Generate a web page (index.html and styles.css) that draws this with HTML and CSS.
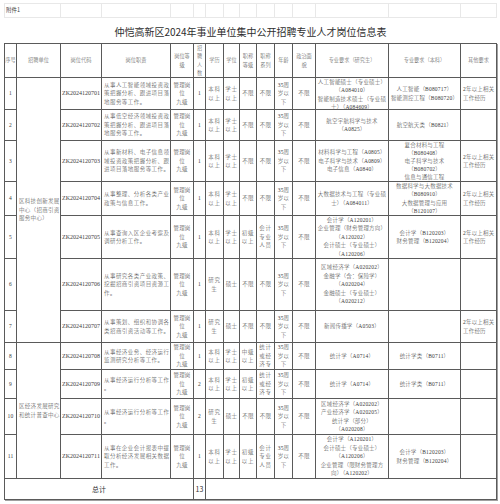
FILE: index.html
```html
<!DOCTYPE html>
<html lang="zh-CN">
<head>
<meta charset="utf-8">
<title>岗位信息表</title>
<link rel="stylesheet" href="styles.css">
</head>
<body>
<div class="page">
  <div class="sheet">
    <div class="sc cs2 note">附件1</div>
    <div class="sc"></div><div class="sc"></div><div class="sc"></div><div class="sc"></div>
    <div class="sc"></div><div class="sc"></div><div class="sc"></div><div class="sc"></div>
    <div class="sc"></div><div class="sc"></div><div class="sc"></div><div class="sc"></div>
    <div class="sc"></div>
  </div>
  <div class="title">仲恺高新区2024年事业单位集中公开招聘专业人才岗位信息表</div>
  <div class="grid">
    <!-- header -->
    <div class="cell h">序号</div>
    <div class="cell h">招聘单位</div>
    <div class="cell h">岗位代码</div>
    <div class="cell h">岗位职责</div>
    <div class="cell h">岗位等<br>级</div>
    <div class="cell h">招<br>聘<br>人<br>数</div>
    <div class="cell h">学历</div>
    <div class="cell h">学位</div>
    <div class="cell h">职称<br>等级</div>
    <div class="cell h">职称<br>系列</div>
    <div class="cell h">年龄</div>
    <div class="cell h">政治面<br>貌</div>
    <div class="cell h">专业要求（研究生）</div>
    <div class="cell h">专业要求（本科）</div>
    <div class="cell h">其他要求</div>

    <!-- row 1 -->
    <div class="cell">1</div>
    <div class="cell l rs7 unit">区科技创新发展<br>中心（招商引资<br>服务中心）</div>
    <div class="cell code">ZK2024120701</div>
    <div class="cell l duty">从事人工智能领域投资政<br>策把握分析、跟进项目落<br>地服务等工作。</div>
    <div class="cell">管理岗<br>位<br>九级</div>
    <div class="cell">1</div>
    <div class="cell sp">本科<br>以上</div>
    <div class="cell sp">学士<br>以上</div>
    <div class="cell">不限</div>
    <div class="cell">不限</div>
    <div class="cell">35周<br>岁以<br>下</div>
    <div class="cell">不限</div>
    <div class="cell">人工智能硕士（专业硕士）<br>（A084010）<br>智能制造技术硕士（专业硕<br>士）（A084609）</div>
    <div class="cell">人工智能（B080717）<br>智能测控工程（B080720）</div>
    <div class="cell l other">2年以上相关<br>工作经历</div>

    <!-- row 2 -->
    <div class="cell">2</div>
    <div class="cell code">ZK2024120702</div>
    <div class="cell l duty">从事低空经济领域投资政<br>策把握分析、跟进项目落<br>地服务等工作。</div>
    <div class="cell">管理岗<br>位<br>九级</div>
    <div class="cell">1</div>
    <div class="cell sp">本科<br>以上</div>
    <div class="cell sp">学士<br>以上</div>
    <div class="cell">不限</div>
    <div class="cell">不限</div>
    <div class="cell">35周<br>岁以<br>下</div>
    <div class="cell">不限</div>
    <div class="cell">航空宇航科学与技术<br>（A0825）</div>
    <div class="cell">航空航天类（B0821）</div>
    <div class="cell l other"></div>

    <!-- row 3 -->
    <div class="cell">3</div>
    <div class="cell code">ZK2024120703</div>
    <div class="cell l duty">从事新材料、电子信息领<br>域投资政策把握分析、跟<br>进项目落地服务等工作。</div>
    <div class="cell">管理岗<br>位<br>九级</div>
    <div class="cell">1</div>
    <div class="cell sp">本科<br>以上</div>
    <div class="cell sp">学士<br>以上</div>
    <div class="cell">不限</div>
    <div class="cell">不限</div>
    <div class="cell">35周<br>岁以<br>下</div>
    <div class="cell">不限</div>
    <div class="cell">材料科学与工程（A0805）<br>电子科学与技术（A0809）<br>电子信息（A0840）</div>
    <div class="cell tight">复合材料与工程<br>（B080408）<br>电子科学与技术<br>（B080702）<br>信息与通信工程</div>
    <div class="cell l other">2年以上相关<br>工作经历</div>

    <!-- row 4 -->
    <div class="cell">4</div>
    <div class="cell code">ZK2024120704</div>
    <div class="cell l duty">从事整理、分析各类产业<br>政策与信息工作。</div>
    <div class="cell">管理岗<br>位<br>九级</div>
    <div class="cell">1</div>
    <div class="cell sp">本科<br>以上</div>
    <div class="cell sp">学士<br>以上</div>
    <div class="cell">不限</div>
    <div class="cell">不限</div>
    <div class="cell">35周<br>岁以<br>下</div>
    <div class="cell">不限</div>
    <div class="cell">大数据技术与工程（专业硕<br>士）（A084011）</div>
    <div class="cell">数据科学与大数据技术<br>（B080910）<br>大数据管理与应用<br>（B120107）</div>
    <div class="cell l other">2年以上相关<br>工作经历</div>

    <!-- row 5 -->
    <div class="cell">5</div>
    <div class="cell code">ZK2024120705</div>
    <div class="cell l duty">从事查询入区企业考察及<br>调研分析工作。</div>
    <div class="cell">管理岗<br>位<br>九级</div>
    <div class="cell">1</div>
    <div class="cell sp">本科<br>以上</div>
    <div class="cell sp">学士<br>以上</div>
    <div class="cell sp">初级<br>以上</div>
    <div class="cell sp">会计<br>专业<br>人员</div>
    <div class="cell">35周<br>岁以<br>下</div>
    <div class="cell">不限</div>
    <div class="cell">会计学（A120201）<br>企业管理（财务管理方向）<br>（A120202）<br>会计硕士（专业硕士）<br>（A120206）</div>
    <div class="cell">会计学（B120203）<br>财务管理（B120204）</div>
    <div class="cell l other">2年以上相关<br>工作经历</div>

    <!-- row 6 -->
    <div class="cell">6</div>
    <div class="cell code">ZK2024120706</div>
    <div class="cell l duty">从事研究各类产业政策、<br>挖掘招商引资项目资源工<br>作。</div>
    <div class="cell">管理岗<br>位<br>九级</div>
    <div class="cell">1</div>
    <div class="cell sp">研究<br>生</div>
    <div class="cell">硕士</div>
    <div class="cell">不限</div>
    <div class="cell">不限</div>
    <div class="cell">35周<br>岁以<br>下</div>
    <div class="cell">不限</div>
    <div class="cell">区域经济学（A020202）<br>金融学（含：保险学）<br>（A020204）<br>金融硕士（专业硕士）<br>（A020212）</div>
    <div class="cell"></div>
    <div class="cell l other"></div>

    <!-- row 7 -->
    <div class="cell">7</div>
    <div class="cell code">ZK2024120707</div>
    <div class="cell l duty">从事策划、组织和协调各<br>类招商引资活动等工作。</div>
    <div class="cell">管理岗<br>位<br>九级</div>
    <div class="cell">1</div>
    <div class="cell sp">研究<br>生</div>
    <div class="cell">硕士</div>
    <div class="cell">不限</div>
    <div class="cell">不限</div>
    <div class="cell">35周<br>岁以<br>下</div>
    <div class="cell">不限</div>
    <div class="cell">新闻传播学（A0503）</div>
    <div class="cell"></div>
    <div class="cell l other">2年以上相关<br>工作经历</div>

    <!-- row 8 -->
    <div class="cell">8</div>
    <div class="cell l rs4 unit">区经济发展研究<br>和统计普查中心</div>
    <div class="cell code">ZK2024120708</div>
    <div class="cell l duty">从事经济业务、经济运行<br>监测研究分析等工作。</div>
    <div class="cell">管理岗<br>位<br>九级</div>
    <div class="cell">1</div>
    <div class="cell sp">本科<br>以上</div>
    <div class="cell sp">学士<br>以上</div>
    <div class="cell sp">中级<br>以上</div>
    <div class="cell sp">统计<br>或经<br>济专</div>
    <div class="cell">35周<br>岁以<br>下</div>
    <div class="cell">不限</div>
    <div class="cell">统计学（A0714）</div>
    <div class="cell">统计学类（B0711）</div>
    <div class="cell l other"></div>

    <!-- row 9 -->
    <div class="cell">9</div>
    <div class="cell code">ZK2024120709</div>
    <div class="cell l duty">从事经济运行分析等工作<br>。</div>
    <div class="cell">管理岗<br>位<br>九级</div>
    <div class="cell">2</div>
    <div class="cell sp">本科<br>以上</div>
    <div class="cell sp">学士<br>以上</div>
    <div class="cell sp">初级<br>以上</div>
    <div class="cell sp">统计<br>或经<br>济专</div>
    <div class="cell">35周<br>岁以<br>下</div>
    <div class="cell">不限</div>
    <div class="cell">统计学（A0714）</div>
    <div class="cell">统计学类（B0711）</div>
    <div class="cell l other"></div>

    <!-- row 10 -->
    <div class="cell">10</div>
    <div class="cell code">ZK2024120710</div>
    <div class="cell l duty">从事经济运行分析等工作<br>。</div>
    <div class="cell">管理岗<br>位<br>九级</div>
    <div class="cell">2</div>
    <div class="cell sp">研究<br>生</div>
    <div class="cell">硕士</div>
    <div class="cell">不限</div>
    <div class="cell">不限</div>
    <div class="cell">35周<br>岁以<br>下</div>
    <div class="cell">不限</div>
    <div class="cell">区域经济学（A020202）<br>产业经济学（A020205）<br>统计学（部分）<br>（A020208）</div>
    <div class="cell"></div>
    <div class="cell l other"></div>

    <!-- row 11 -->
    <div class="cell">11</div>
    <div class="cell code">ZK2024120711</div>
    <div class="cell l duty">从事在企业会计报表中提<br>取分析经济发展相关数据<br>工作。</div>
    <div class="cell">管理岗<br>位<br>九级</div>
    <div class="cell">1</div>
    <div class="cell sp">本科<br>以上</div>
    <div class="cell sp">学士<br>以上</div>
    <div class="cell sp">初级<br>以上</div>
    <div class="cell sp">会计<br>专业<br>人员</div>
    <div class="cell">35周<br>岁以<br>下</div>
    <div class="cell">不限</div>
    <div class="cell">会计学（A120201）<br>会计硕士（专业硕士）<br>（A120206）<br>企业管理（限财务管理方<br>向）（A120202）</div>
    <div class="cell">会计学（B120203）<br>财务管理（B120204）</div>
    <div class="cell l other"></div>

    <!-- total -->
    <div class="cell cs5 total">总计</div>
    <div class="cell total">13</div>
    <div class="cell cs9"></div>
  </div>
</div>
</body>
</html>
```

FILE: styles.css
```css
* {
  box-sizing: border-box;
}

html,
body {
  margin: 0;
  padding: 0;
  background: #ffffff;
}

body {
  width: 500px;
  height: 504px;
  overflow: hidden;
  font-family: "Liberation Serif", "Noto Sans CJK SC", serif;
  color: #3c3c3c;
}

.page {
  padding: 3px 0 0 4px;
}

.sheet {
  display: grid;
  grid-template-columns: 12px 44px 41px 69px 23px 12px 18px 16px 17px 18px 18px 23px 73px 72px 36px;
  height: 15px;
  width: 493px;
  border-top: 1px solid #e8e8e8;
  border-bottom: 1px solid #e8e8e8;
  border-left: 1px solid #e8e8e8;
}

.sc {
  border-right: 1px solid #e8e8e8;
}

.note {
  font-family: "Noto Sans CJK SC", sans-serif;
  font-size: 5.5px;
  line-height: 13px;
  color: #444444;
  padding-left: 1px;
}

.title {
  height: 25px;
  width: 493px;
  display: flex;
  align-items: center;
  justify-content: center;
  padding-top: 2px;
  font-family: "Noto Sans CJK SC", sans-serif;
  font-size: 10px;
  color: #2e2e2e;
  white-space: nowrap;
}

.grid {
  display: grid;
  grid-template-columns: 12px 44px 41px 69px 23px 12px 18px 16px 17px 18px 18px 23px 73px 72px 36px;
  grid-template-rows: 34px 32px 31px 41px 34px 43px 52px 32px 27px 29px 36px 44px 21px;
  width: 493px;
  border-top: 1px solid #5a5a5a;
  border-left: 1px solid #5a5a5a;
  box-shadow: 1px 1px 0 #a0a0a0;
}

.cell {
  display: flex;
  flex-direction: column;
  justify-content: safe center;
  align-items: center;
  text-align: center;
  overflow: hidden;
  white-space: nowrap;
  border-right: 1px solid #5a5a5a;
  border-bottom: 1px solid #5a5a5a;
  font-size: 5.5px;
  font-weight: 300;
  line-height: 8.4px;
  letter-spacing: 0.2px;
  min-width: 0;
  min-height: 0;
}

.h {
  font-family: "Noto Sans CJK SC", sans-serif;
  font-size: 5.2px;
  line-height: 8.2px;
  color: #4a4a4a;
  letter-spacing: 0;
}

.l {
  align-items: flex-start;
  text-align: left;
}

.unit {
  padding-left: 2px;
  letter-spacing: 0.3px;
}

.duty {
  padding-left: 2px;
  letter-spacing: 0.45px;
}

.other {
  padding-left: 2px;
  letter-spacing: 0.2px;
}

.sp {
  letter-spacing: 0.8px;
}

.tight {
  line-height: 8px;
}

.code {
  font-size: 6px;
  letter-spacing: 0;
}

.total {
  font-family: "Noto Sans CJK SC", sans-serif;
  font-size: 7px;
  font-weight: 400;
  color: #333333;
  letter-spacing: 0;
}

.rs7 {
  grid-row: span 7;
}

.rs4 {
  grid-row: span 4;
}

.cs2 {
  grid-column: span 2;
}

.cs5 {
  grid-column: span 5;
}

.cs9 {
  grid-column: span 9;
}
```
